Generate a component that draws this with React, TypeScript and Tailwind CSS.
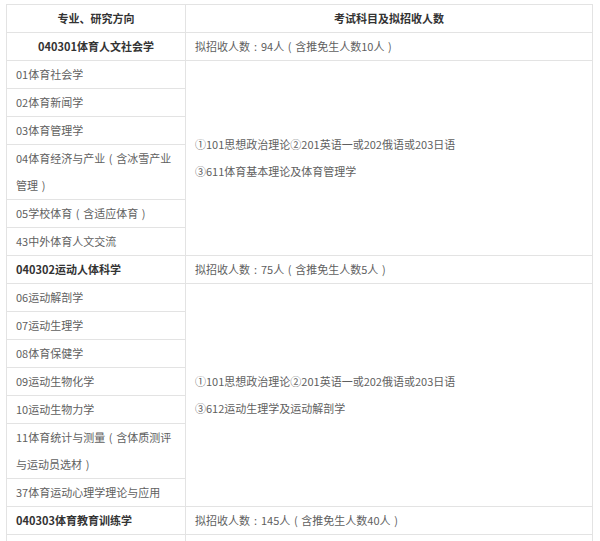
import React from "react";

const exam1 = ["①101思想政治理论②201英语一或202俄语或203日语", "③611体育基本理论及体育管理学"];
const exam2 = ["①101思想政治理论②201英语一或202俄语或203日语", "③612运动生理学及运动解剖学"];

const td = "border border-[#e3e3e3] px-[9px] py-0 leading-[27px] align-middle";

function T({ text }: { text: string }) {
  const parts: React.ReactNode[] = [];
  let buf = "";
  let k = 0;
  const flush = () => {
    if (buf) parts.push(<React.Fragment key={k++}>{buf}</React.Fragment>);
    buf = "";
  };
  for (const ch of text) {
    if (ch === "（" || ch === "）" || ch === "：") {
      flush();
      const c = ch === "（" ? "(" : ch === "）" ? ")" : ":";
      parts.push(
        <span key={k++} className="inline-block w-[11px] text-center">
          {c}
        </span>
      );
    } else {
      buf += ch;
    }
  }
  flush();
  return <>{parts}</>;
}

function Quota({ text }: { text: string }) {
  return (
    <td className={`${td} text-[#5f5f5f]`}>
      <T text={text} />
    </td>
  );
}

export default function App() {
  return (
    <div
      className="w-[600px] h-[541px] overflow-hidden bg-white pt-[4px] pl-[6px]"
      style={{ fontFamily: '"Noto Sans CJK SC", "Noto Sans", sans-serif' }}
    >
      <table className="w-[587px] border-collapse table-fixed text-[11px] text-[#5f5f5f]">
        <colgroup>
          <col className="w-[179px]" />
          <col />
        </colgroup>
        <tbody>
          <tr>
            <td className={`${td} text-center font-bold text-[#333]`}>专业、研究方向</td>
            <td className={`${td} text-center font-bold text-[#333]`}>考试科目及拟招收人数</td>
          </tr>
          <tr>
            <td className={`${td} text-center font-bold text-[#333]`}>040301体育人文社会学</td>
            <Quota text="拟招收人数：94人（含推免生人数10人）" />
          </tr>
          <tr>
            <td className={td}>01体育社会学</td>
            <td className={td} rowSpan={6}>
              {exam1.map((l) => (
                <div key={l}>{l}</div>
              ))}
            </td>
          </tr>
          <tr>
            <td className={td}>02体育新闻学</td>
          </tr>
          <tr>
            <td className={td}>03体育管理学</td>
          </tr>
          <tr>
            <td className={td}>
              <T text="04体育经济与产业（含冰雪产业管理）" />
            </td>
          </tr>
          <tr>
            <td className={td}>
              <T text="05学校体育（含适应体育）" />
            </td>
          </tr>
          <tr>
            <td className={td}>43中外体育人文交流</td>
          </tr>
          <tr>
            <td className={`${td} font-bold text-[#333]`}>040302运动人体科学</td>
            <Quota text="拟招收人数：75人（含推免生人数5人）" />
          </tr>
          <tr>
            <td className={td}>06运动解剖学</td>
            <td className={td} rowSpan={7}>
              {exam2.map((l) => (
                <div key={l}>{l}</div>
              ))}
            </td>
          </tr>
          <tr>
            <td className={td}>07运动生理学</td>
          </tr>
          <tr>
            <td className={td}>08体育保健学</td>
          </tr>
          <tr>
            <td className={td}>09运动生物化学</td>
          </tr>
          <tr>
            <td className={td}>10运动生物力学</td>
          </tr>
          <tr>
            <td className={td}>
              <T text="11体育统计与测量（含体质测评与运动员选材）" />
            </td>
          </tr>
          <tr>
            <td className={td}>37体育运动心理学理论与应用</td>
          </tr>
          <tr>
            <td className={`${td} font-bold text-[#333]`}>040303体育教育训练学</td>
            <Quota text="拟招收人数：145人（含推免生人数40人）" />
          </tr>
          <tr>
            <td className={td}>&nbsp;</td>
            <td className={td}>&nbsp;</td>
          </tr>
        </tbody>
      </table>
    </div>
  );
}
